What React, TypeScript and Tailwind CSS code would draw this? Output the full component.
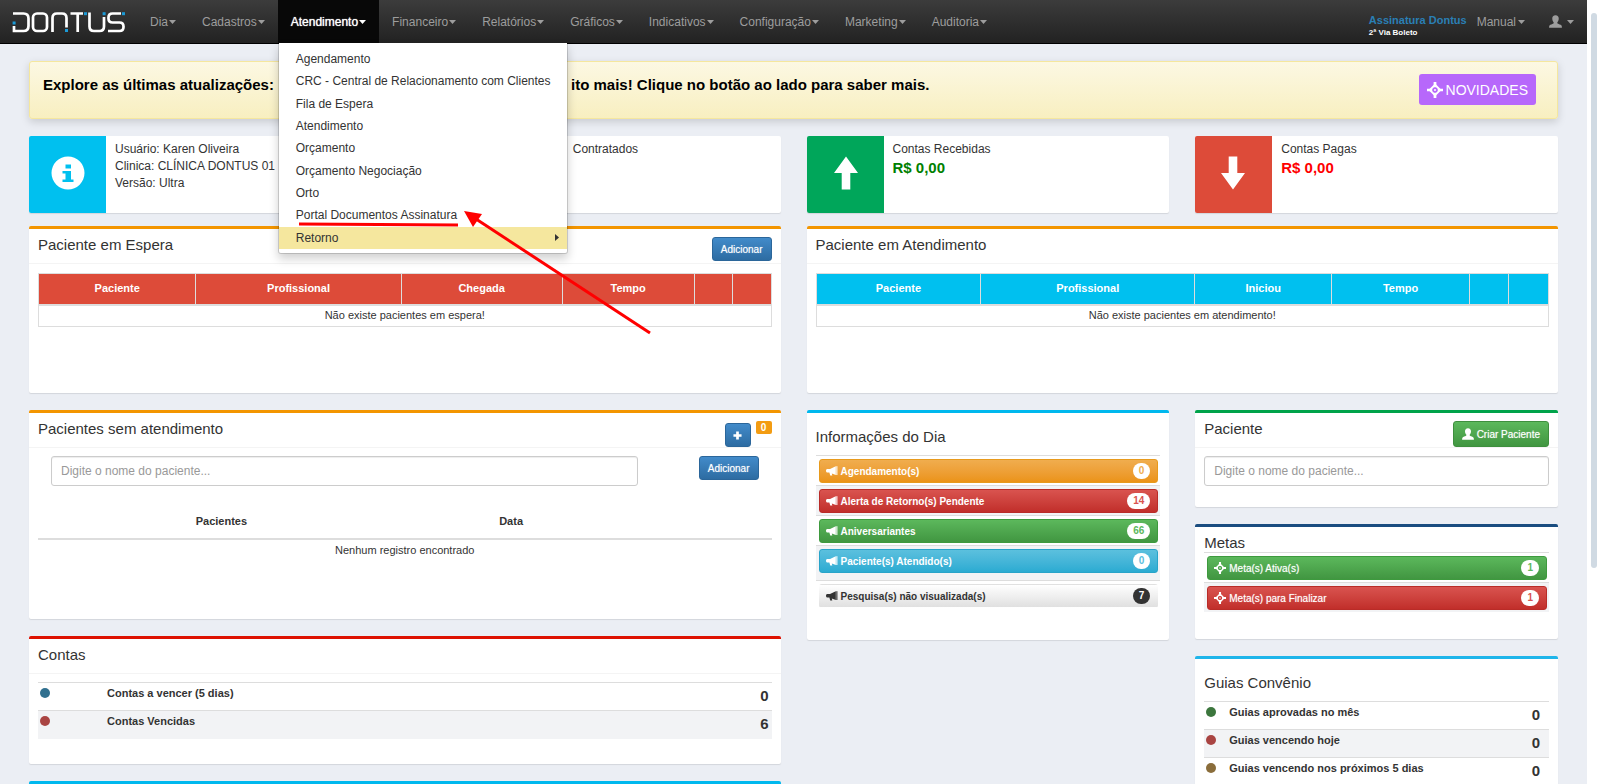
import type { ReactNode } from "react";
import { clsx } from "clsx";

const menuLeft = ["Dia", "Cadastros", "Atendimento", "Financeiro", "Relatórios", "Gráficos", "Indicativos", "Configuração", "Marketing", "Auditoria"];

const atendimentoItems = [
  "Agendamento",
  "CRC - Central de Relacionamento com Clientes",
  "Fila de Espera",
  "Atendimento",
  "Orçamento",
  "Orçamento Negociação",
  "Orto",
  "Portal Documentos Assinatura",
];

const tones = {
  orange: { button: "from-[#f0ad4e] to-[#eb9316] border-[#e89a1c] text-white", badge: "bg-white text-[#f0ad4e]" },
  red: { button: "from-[#d9534f] to-[#c12e2a] border-[#b92c28] text-white", badge: "bg-white text-[#d9534f]" },
  green: { button: "from-[#5cb85c] to-[#419641] border-[#3e9a3e] text-white", badge: "bg-white text-[#5cb85c]" },
  blue: { button: "from-[#5bc0de] to-[#2aabd2] border-[#28a4c9] text-white", badge: "bg-white text-[#5bc0de]" },
  gray: { button: "from-white to-[#e0e0e0] border-transparent text-[#333]", badge: "bg-[#333] text-white" },
};

type Tone = keyof typeof tones;

function Caret() {
  return (
    <svg viewBox="0 0 7 4" className="w-[7px] h-1 fill-current" aria-hidden="true">
      <path d="M0 0h7L3.5 4z" />
    </svg>
  );
}

function UserIcon({ className }: { className?: string }) {
  return (
    <svg viewBox="0 0 14 14" className={clsx("fill-current", className)} aria-hidden="true">
      <path d="M7 .2C4.700.2 3.400 1.800 3.500 4c.1 1.600.7 2.900 1.400 3.700.3.400.3 1.100-.2 1.400C3.400 9.800 1.400 10.300.7 11.100.2 11.700.1 12.500.1 13.600h13.800c0-1.100-.1-1.900-.6-2.500-.7-.8-2.700-1.300-4-2-.5-.3-.5-1-.2-1.400.7-.8 1.300-2.100 1.400-3.700C10.600 1.800 9.300.2 7 .2z" />
    </svg>
  );
}

function TargetIcon({ className }: { className?: string }) {
  return (
    <svg viewBox="0 0 14 14" className={clsx("fill-current", className)} aria-hidden="true">
      <path d="M7 2.400L11.600 7 7 11.600 2.400 7z" fill="none" stroke="currentColor" strokeWidth="1.600" />
      <path d="M5.800 0h2.400v4.600H5.800zM5.800 9.400h2.400V14H5.800zM0 5.800h4.600v2.400H0zM9.400 5.800H14v2.400H9.400z" />
      <circle cx="7" cy="7" r=".9" />
    </svg>
  );
}

function BullhornIcon() {
  return (
    <svg viewBox="0 0 12 10" className="w-3 h-[10px] fill-current" aria-hidden="true">
      <path d="M9.800.3v8.600L5.800 7.500l.5 2H4.200L3.400 6.500H1.500C.6 6.500 0 5.700 0 4.700s.6-1.700 1.500-1.700h2.500z" />
      <path d="M9.800.2h1.800v8.800H9.800z" opacity=".7" />
    </svg>
  );
}

function Logo() {
  return (
    <svg viewBox="0 0 128 42" className="w-32 h-[42px]" role="img" aria-label="Dontus">
      <g fill="none" stroke="#fff" strokeWidth="2.700">
        <path d="M13 12.500h10.500q5 0 5 5v7.500q0 5-5 5H14v-5" />
        <rect x="33" y="12.500" width="14" height="17.500" rx="4" />
        <path d="M52.500 31V17q0-4.500 4.500-4.500h5q4.500 0 4.500 4.500v9.500" />
        <path d="M70.500 12.500H83M77.700 12.500V31" />
        <path d="M89.500 11.500v14q0 4.500 4.500 4.500h5.500q4.500 0 4.500-4.500V16" />
        <path d="M121 12.500h-8.500q-4 0-4 4v1q0 4 4 4h7q4 0 4 4v.5q0 4-4 4H108" />
      </g>
      <g fill="#1b9ad6">
        <rect x="12.600" y="20.500" width="3" height="3" />
        <rect x="65" y="28" width="3" height="3" />
        <rect x="84" y="11.200" width="3" height="3" />
        <rect x="102.600" y="11.200" width="3" height="3" />
        <rect x="122" y="11.200" width="3" height="3" />
      </g>
    </svg>
  );
}

function AtendimentoMenu() {
  return (
    <div className="absolute left-0 top-full z-20">
      <ul className="flex h-[211px] w-[290px] flex-col rounded-b-[3px] border border-t-0 border-black/15 bg-white bg-clip-padding pb-1 pt-[5px] text-[#333] shadow-[0_5px_10px_rgba(0,0,0,0.18)]">
        {atendimentoItems.map((item) => (
          <li key={item} className="flex-1">
            <a href="#" className="flex h-full items-center whitespace-nowrap px-[17px]">{item}</a>
          </li>
        ))}
        <li className="flex-1 bg-[#f5e79e]">
          <a href="#" className="flex h-full items-center justify-between pl-[17px] pr-2">
            Retorno
            <svg viewBox="0 0 4 7" className="h-[7px] w-1 fill-current" aria-hidden="true">
              <path d="M0 0v7l4-3.500z" />
            </svg>
          </a>
        </li>
      </ul>
      {/* Hand-drawn highlight over "Portal Documentos Assinatura" */}
      <svg viewBox="0 0 380 300" className="pointer-events-none absolute left-0 top-0 h-[300px] w-[380px]" aria-hidden="true">
        <path d="M21 181L180 182" stroke="#f00" strokeWidth="3" />
        <path d="M198 176L372 290" stroke="#f00" strokeWidth="3" />
        <path d="M186 168l18 3-9 13z" fill="#f00" />
      </svg>
    </div>
  );
}

function Navbar() {
  return (
    <nav className="flex h-11 items-center justify-between border-b border-black bg-linear-to-b from-[#3c3c3c] to-[#222] text-xs text-[#9d9d9d]">
      <div className="flex h-full items-center">
        <a href="#" className="mr-[9px]"><Logo /></a>
        <ul className="flex h-full">
          {menuLeft.map((item) => {
            const active = item === "Atendimento";
            return (
              <li key={item} className="relative">
                <a href="#" className={clsx("flex h-full items-center gap-px px-[13px]", active && "bg-[#080808] text-white [text-shadow:0_0_1px_#fff]")}>
                  {item}
                  <Caret />
                </a>
                {active && <AtendimentoMenu />}
              </li>
            );
          })}
        </ul>
      </div>
      <div className="flex h-full items-center">
        <div className="flex flex-col pt-2 font-bold">
          <a href="#" className="text-[11px] leading-[14px] text-[#2a7fb5]">Assinatura Dontus</a>
          <a href="#" className="text-[8px] leading-3 text-white">2ª Via Boleto</a>
        </div>
        <a href="#" className="ml-[10px] flex items-center gap-[2px]">Manual<Caret /></a>
        <a href="#" aria-label="Usuário" className="flex items-center gap-[5px] pl-6 pr-[13px]">
          <UserIcon className="size-[13px]" />
          <Caret />
        </a>
      </div>
    </nav>
  );
}

function InfoBox({ color, icon, children }: { color: string; icon: ReactNode; children: ReactNode }) {
  return (
    <div className="flex min-h-[77px] overflow-hidden rounded-[2px] bg-white shadow-[0_1px_1px_rgba(0,0,0,0.1)]">
      <div className={clsx("flex w-[77px] shrink-0 items-center justify-center pb-1", color)}>
        <svg viewBox="0 0 34 34" className="size-[34px] fill-white" aria-hidden="true">{icon}</svg>
      </div>
      <div className="px-[9px] pt-[5px] text-xs leading-[17px]">{children}</div>
    </div>
  );
}

function Box({ className, children }: { className: string; children?: ReactNode }) {
  return <section className={clsx("rounded-[2px] border-t-[3px] bg-white shadow-[0_1px_1px_rgba(0,0,0,0.1)]", className)}>{children}</section>;
}

function BoxHeader({ title, children }: { title: string; children?: ReactNode }) {
  return (
    <header className="flex h-[35px] items-start justify-between border-b border-[#f4f4f4] px-[9px] pt-2">
      <h3 className="text-[15px] leading-4">{title}</h3>
      {children}
    </header>
  );
}

function BlueButton({ className, label, children }: { className?: string; label?: string; children: ReactNode }) {
  return (
    <button
      type="button"
      aria-label={label}
      className={clsx("flex h-6 items-center justify-center rounded-[3px] border border-[#2b669a] bg-linear-to-b from-[#428bca] to-[#2d6ca2] px-2 text-[10px] text-white [text-shadow:0_0_1px_rgba(255,255,255,0.6)]", className)}
    >
      {children}
    </button>
  );
}

function PatientInput({ id, className }: { id: string; className?: string }) {
  return (
    <input
      id={id}
      aria-label="Nome do paciente"
      placeholder="Digite o nome do paciente..."
      className={clsx("h-[30px] rounded-[3px] border border-[#ccc] px-[9px] text-xs shadow-[inset_0_1px_1px_rgba(0,0,0,0.075)] placeholder:text-[#999]", className)}
    />
  );
}

function QueueTable({ time, empty, head, cols }: { time: string; empty: string; head: string; cols: string[] }) {
  return (
    <table className="w-full table-fixed border-collapse text-center text-[11px]">
      <colgroup>
        {cols.map((col, i) => <col key={i} className={col} />)}
      </colgroup>
      <thead>
        <tr className={clsx("h-[31px] text-white", head)}>
          {["Paciente", "Profissional", time, "Tempo", "", ""].map((label, i) => (
            <th key={i} className="border border-b-2 border-[#ddd] pb-[2px] font-bold">{label}</th>
          ))}
        </tr>
      </thead>
      <tbody>
        <tr className="h-[22px]">
          <td colSpan={6} className="border border-[#ddd] pb-[2px]">{empty}</td>
        </tr>
      </tbody>
    </table>
  );
}

function AlertButton({ tone, icon, label, count, bold = true }: { tone: Tone; icon: ReactNode; label: string; count: number; bold?: boolean }) {
  return (
    <button
      type="button"
      className={clsx(
        "flex h-6 w-full items-center gap-[3px] rounded-[3px] border bg-linear-to-b pl-[6px] pr-[7px] text-[10px]",
        bold ? "font-bold" : "[text-shadow:0_0_1px_rgba(255,255,255,0.6)]",
        tones[tone].button
      )}
    >
      {icon}
      {label}
      <span className={clsx("ml-auto rounded-full px-[6px] font-bold leading-4", tones[tone].badge)}>{count}</span>
    </button>
  );
}

function CountTable({ rows, dotCol, numberPad }: { rows: { dot: string; label: string; count: number }[]; dotCol: string; numberPad: string }) {
  return (
    <table className="w-full border-collapse font-bold">
      <tbody>
        {rows.map((row) => (
          <tr key={row.label} className="h-7 border-t border-[#ddd] align-top even:bg-[#f2f3f5]">
            <td className={clsx("pl-[2px] pt-[5px]", dotCol)}>
              <span className={clsx("block size-[10px] rounded-full", row.dot)} />
            </td>
            <td className="text-[11px] leading-5">{row.label}</td>
            <td className={clsx("text-right text-[15px] leading-[26px]", numberPad)}>{row.count}</td>
          </tr>
        ))}
      </tbody>
    </table>
  );
}

export default function App() {
  return (
    <div className="flex h-screen overflow-hidden bg-white font-['Liberation_Sans',Arial,sans-serif] text-[#333]">
      <div className="flex-1 overflow-hidden bg-[#ebeef4]">
        <Navbar />

        <main className="flex flex-col px-[29px] pt-[17px]">
          {/* Banner */}
          <div className="flex min-h-[58px] items-start justify-between rounded-[3px] border border-[#f5e79e] bg-linear-to-b from-[#fcf8e3] to-[#f8efc0] pl-[13px] pr-[21px] pt-3 shadow-[0_3px_8px_rgba(0,0,0,0.15)]">
            <p className="flex whitespace-nowrap text-[15px] font-bold leading-[22px] text-black">
              <span className="w-[528px]">Explore as últimas atualizações:</span>
              <span>ito mais! Clique no botão ao lado para saber mais.</span>
            </p>
            <button type="button" className="flex h-[31px] items-center gap-[3px] rounded-[3px] bg-[#b768fb] px-2 text-sm text-white">
              <TargetIcon className="size-4" />
              NOVIDADES
            </button>
          </div>

          {/* Summary */}
          <div className="mt-[17px] grid grid-cols-4 gap-[26px]">
            <InfoBox
              color="bg-[#00c0ef]"
              icon={<path fillRule="evenodd" d="M17 .5a16.500 16.500 0 1 1 0 33 16.500 16.500 0 0 1 0-33zM14.500 8.500v4h5.500v-4zM11.500 15v2.500h3v6h-3v2.500h11v-2.500H20V15z" />}
            >
              <p>Usuário: Karen Oliveira</p>
              <p>Clinica: CLÍNICA DONTUS 01</p>
              <p>Versão: Ultra</p>
            </InfoBox>
            <InfoBox color="bg-[#f39c12]" icon={<path d="M6 6h22v4H6zM6 15h22v4H6zM6 24h22v4H6z" />}>
              <p className="pl-[69px]">Contratados</p>
            </InfoBox>
            <InfoBox color="bg-[#00a65a]" icon={<path d="M18 .5l12 16.500h-7.700v16.500h-8.600V17H6z" />}>
              <p>Contas Recebidas</p>
              <p className="text-[15px] font-bold leading-5 text-[#008000]">R$ 0,00</p>
            </InfoBox>
            <InfoBox color="bg-[#dd4b39]" icon={<path d="M11.700.5h8.600V17H28L16 33.500 4 17h7.700z" />}>
              <p>Contas Pagas</p>
              <p className="text-[15px] font-bold leading-5 text-[#f00]">R$ 0,00</p>
            </InfoBox>
          </div>

          {/* Queues */}
          <div className="mt-[13px] grid grid-cols-2 gap-[26px]">
            <Box className="min-h-[167px] border-[#f39500]">
              <BoxHeader title="Paciente em Espera">
                <BlueButton>Adicionar</BlueButton>
              </BoxHeader>
              <div className="px-[9px] pt-[9px]">
                <QueueTable
                  time="Chegada"
                  empty="Não existe pacientes em espera!"
                  head="bg-[#dd4b39]"
                  cols={["w-[21.5%]", "w-[28%]", "w-[22%]", "w-[18%]", "w-[5.25%]", "w-[5.25%]"]}
                />
              </div>
            </Box>
            <Box className="min-h-[167px] border-[#f39500]">
              <BoxHeader title="Paciente em Atendimento" />
              <div className="px-[9px] pt-[9px]">
                <QueueTable
                  time="Iniciou"
                  empty="Não existe pacientes em atendimento!"
                  head="bg-[#00c0ef]"
                  cols={["w-[22.5%]", "w-[29.2%]", "w-[18.7%]", "w-[18.8%]", "w-[5.4%]", "w-[5.4%]"]}
                />
              </div>
            </Box>
          </div>

          <div className="mt-[17px] grid grid-cols-2 items-start gap-[26px]">
            <div className="flex flex-col gap-[17px]">
              <Box className="min-h-[209px] border-[#f39500]">
                <BoxHeader title="Pacientes sem atendimento">
                  <div className="flex items-start gap-[5px]">
                    <BlueButton label="Expandir" className="mt-[2px] w-[26px]">
                      <svg viewBox="0 0 10 10" className="size-[9px] shrink-0 fill-white" aria-hidden="true">
                        <path d="M3.500.5h3v3h3v3h-3v3h-3v-3h-3v-3h3z" />
                      </svg>
                    </BlueButton>
                    <span className="w-4 rounded-[2px] bg-[#f39c12] text-center text-[10px] font-bold leading-[13px] text-white">0</span>
                  </div>
                </BoxHeader>
                <div className="px-[9px] pt-2">
                  <form className="flex items-start justify-between px-[13px]">
                    <PatientInput id="paciente-espera" className="w-[83%]" />
                    <BlueButton>Adicionar</BlueButton>
                  </form>
                  <table className="mt-[18px] w-full table-fixed border-collapse text-center text-[11px]">
                    <thead>
                      <tr className="h-[35px] border-b-2 border-[#ddd]">
                        <th className="w-1/2">Pacientes</th>
                        <th className="w-[29%]">Data</th>
                        <th />
                      </tr>
                    </thead>
                    <tbody>
                      <tr className="h-[21px]">
                        <td colSpan={3}>Nenhum registro encontrado</td>
                      </tr>
                    </tbody>
                  </table>
                </div>
              </Box>

              <Box className="min-h-[128px] border-[#dd1100]">
                <BoxHeader title="Contas" />
                <div className="px-[9px] pt-2">
                  <CountTable
                    dotCol="w-[69px]"
                    numberPad="pr-[3px]"
                    rows={[
                      { dot: "bg-[#31708f]", label: "Contas a vencer (5 dias)", count: 0 },
                      { dot: "bg-[#a94442]", label: "Contas Vencidas", count: 6 },
                    ]}
                  />
                </div>
              </Box>

              <Box className="min-h-[128px] border-[#00b8ee]" />
            </div>

            <div className="grid grid-cols-2 items-start gap-[26px]">
              <Box className="min-h-[230px] border-[#00b8ee] px-[9px] pt-4">
                <h3 className="text-[15px] leading-4">Informações do Dia</h3>
                <ul className="mt-[10px] [&>li]:border-t [&>li]:border-[#ddd] [&>li]:py-[3px] [&>li]:pl-[3px] [&>li]:pr-[2px] [&>li:nth-child(even)]:bg-[#f2f3f5]">
                  <li className="h-[30px]"><AlertButton tone="orange" icon={<BullhornIcon />} label="Agendamento(s)" count={0} /></li>
                  <li className="h-[30px]"><AlertButton tone="red" icon={<BullhornIcon />} label="Alerta de Retorno(s) Pendente" count={14} /></li>
                  <li className="h-[30px]"><AlertButton tone="green" icon={<BullhornIcon />} label="Aniversariantes" count={66} /></li>
                  <li className="h-[35px]"><AlertButton tone="blue" icon={<BullhornIcon />} label="Paciente(s) Atendido(s)" count={0} /></li>
                  <li><AlertButton tone="gray" icon={<BullhornIcon />} label="Pesquisa(s) não visualizada(s)" count={7} /></li>
                </ul>
              </Box>

              <div className="flex flex-col gap-[17px]">
                <Box className="min-h-[97px] border-[#00a34a]">
                  <BoxHeader title="Paciente">
                    <button
                      type="button"
                      className="flex h-[26px] items-center gap-[3px] rounded-[3px] border border-[#3e8f3e] bg-linear-to-b from-[#5cb85c] to-[#419641] px-2 text-[10px] text-white [text-shadow:0_0_1px_rgba(255,255,255,0.6)]"
                    >
                      <UserIcon className="size-3" />
                      Criar Paciente
                    </button>
                  </BoxHeader>
                  <div className="px-[9px] pt-2">
                    <PatientInput id="paciente-busca" className="w-full" />
                  </div>
                </Box>

                <Box className="min-h-[115px] border-[#1a4d80] px-[9px] pt-2">
                  <h3 className="text-[15px] leading-4">Metas</h3>
                  <ul className="mt-px [&>li]:h-[30px] [&>li]:border-t [&>li]:border-[#ddd] [&>li]:py-[3px] [&>li]:pl-[3px] [&>li]:pr-[2px] [&>li:nth-child(even)]:bg-[#f2f3f5]">
                    <li><AlertButton tone="green" icon={<TargetIcon className="size-3" />} label="Meta(s) Ativa(s)" count={1} bold={false} /></li>
                    <li><AlertButton tone="red" icon={<TargetIcon className="size-3" />} label="Meta(s) para Finalizar" count={1} bold={false} /></li>
                  </ul>
                </Box>

                <Box className="min-h-[150px] border-[#1fb5ea] px-[9px] pt-4">
                  <h3 className="mb-[10px] text-[15px] leading-4">Guias Convênio</h3>
                  <CountTable
                    dotCol="w-[25px]"
                    numberPad="pr-[9px]"
                    rows={[
                      { dot: "bg-[#3c763d]", label: "Guias aprovadas no mês", count: 0 },
                      { dot: "bg-[#a94442]", label: "Guias vencendo hoje", count: 0 },
                      { dot: "bg-[#8a6d3b]", label: "Guias vencendo nos próximos 5 dias", count: 0 },
                    ]}
                  />
                </Box>
              </div>
            </div>
          </div>
        </main>
      </div>

      {/* Scrollbar */}
      <div className="w-[13px] shrink-0 bg-white pl-1 pt-[13px]">
        <div className="h-[72%] w-[6px] rounded-full bg-[#d0dae3]" />
      </div>
    </div>
  );
}
